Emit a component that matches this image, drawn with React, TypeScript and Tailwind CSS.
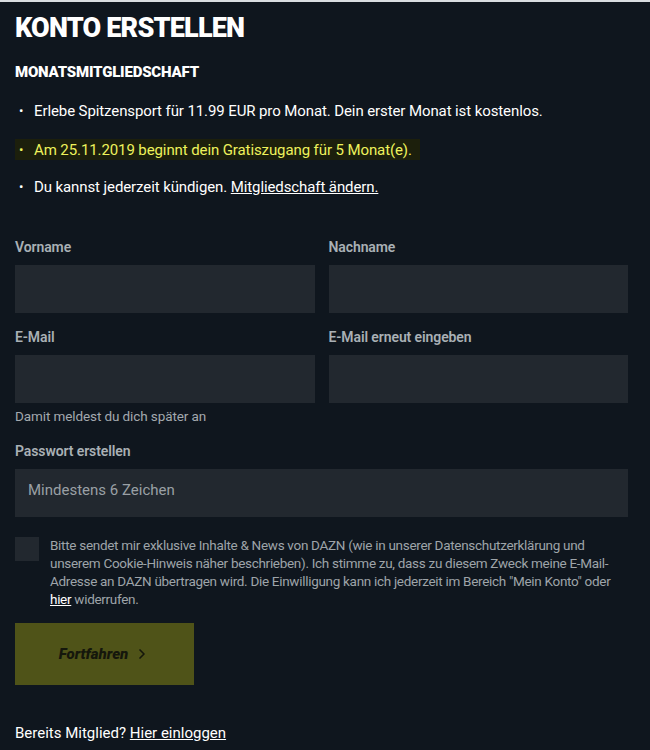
import { ChevronRight } from 'lucide-react';

const font = { fontFamily: '"Roboto", "Liberation Sans", sans-serif' };

function Field({ label, placeholder }: { label: string; placeholder?: string }) {
  return (
    <div className="flex flex-col">
      <label className="text-[14px] font-semibold text-[#a9b0b5] h-[18px] leading-[18px] tracking-[-0.1px]">
        {label}
      </label>
      <input
        type="text"
        placeholder={placeholder}
        className="mt-[9px] h-[48px] w-full bg-[#22282f] px-[13px] pb-[6px] text-[15px] text-white placeholder:text-[#9aa0a5] outline-none"
      />
    </div>
  );
}

export default function App() {
  return (
    <div className="min-h-[750px] w-[650px] bg-[#0f161e] border-t-2 border-[#d9dde0] text-white" style={font}>
      <div className="w-[628px] pl-[15px] pt-[10px]">
        <h1 className="text-[27px] leading-[32px] font-black tracking-[-0.8px]">KONTO ERSTELLEN</h1>
        <h2 className="mt-[20px] text-[15px] leading-[16px] font-black tracking-[-0.2px]">MONATSMITGLIEDSCHAFT</h2>

        <ul className="mt-[21px] text-[15px] leading-[20px] tracking-[-0.1px]">
          <li className="flex items-center h-[20px]">
            <span className="w-[19px] pl-[4px] text-[13px]">•</span>
            Erlebe Spitzensport für 11.99 EUR pro Monat. Dein erster Monat ist kostenlos.
          </li>
          <li className="mt-[18px] flex items-center h-[21px] w-[405px] bg-[#1c1f0c] text-[#eef25c]">
            <span className="w-[19px] pl-[4px] text-[13px]">•</span>
            Am 25.11.2019 beginnt dein Gratiszugang für 5 Monat(e).
          </li>
          <li className="mt-[17px] flex items-center h-[20px]">
            <span className="w-[19px] pl-[4px] text-[13px]">•</span>
            Du kannst jederzeit kündigen.&nbsp;<a className="underline">Mitgliedschaft ändern.</a>
          </li>
        </ul>

        <div className="mt-[41px] grid grid-cols-2 gap-x-[14px] gap-y-[15px]">
          <Field label="Vorname" />
          <Field label="Nachname" />
          <Field label="E-Mail" />
          <Field label="E-Mail erneut eingeben" />
        </div>
        <p className="mt-[4px] text-[13.5px] leading-[18px] text-[#a3a9ae] tracking-[-0.1px]">
          Damit meldest du dich später an
        </p>

        <div className="mt-[17px]">
          <Field label="Passwort erstellen" placeholder="Mindestens 6 Zeichen" />
        </div>

        <div className="mt-[20px] flex gap-[11px]">
          <div className="h-[24px] w-[24px] shrink-0 bg-[#22282f]" />
          <p className="-mt-[1px] whitespace-nowrap text-[13.5px] leading-[18px] text-[#9ea4a9] tracking-[-0.3px]">
            Bitte sendet mir exklusive Inhalte &amp; News von DAZN (wie in unserer Datenschutzerklärung und
            <br />
            unserem Cookie-Hinweis näher beschrieben). Ich stimme zu, dass zu diesem Zweck meine E-Mail-
            <br />
            Adresse an DAZN übertragen wird. Die Einwilligung kann ich jederzeit im Bereich "Mein Konto" oder
            <br />
            <a className="text-white underline">hier</a> widerrufen.
          </p>
        </div>

        <button className="mt-[15px] flex h-[62px] w-[179px] items-center justify-center gap-[6px] bg-[#4f5318] text-[15px] font-black italic text-[#15170c]">
          Fortfahren
          <ChevronRight size={16} strokeWidth={2.5} />
        </button>

        <p className="mt-[38px] text-[15px] leading-[20px]">
          Bereits Mitglied? <a className="underline">Hier einloggen</a>
        </p>
      </div>
    </div>
  );
}
